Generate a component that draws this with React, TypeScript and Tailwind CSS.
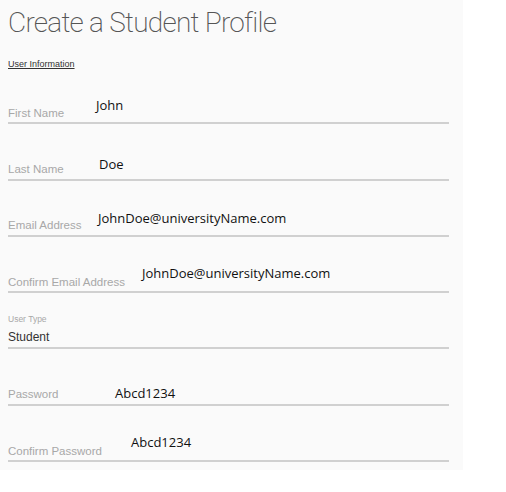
import React from 'react';

interface Field {
  label: string;
  value: string;
  labelBox: string;
  valueShift: string;
}

const fields: Field[] = [
  { label: 'First Name', value: 'John', labelBox: 'w-[88px]', valueShift: 'mb-[7px]' },
  { label: 'Last Name', value: 'Doe', labelBox: 'w-[91px]', valueShift: 'mb-[5px]' },
  { label: 'Email Address', value: 'JohnDoe@universityName.com', labelBox: 'w-[90px]', valueShift: 'mb-[7px]' },
  { label: 'Confirm Email Address', value: 'JohnDoe@universityName.com', labelBox: 'w-[134px]', valueShift: 'mb-[8px]' },
];

const passwordFields: Field[] = [
  { label: 'Password', value: 'Abcd1234', labelBox: 'w-[107px]', valueShift: 'mb-[1px]' },
  { label: 'Confirm Password', value: 'Abcd1234', labelBox: 'w-[123px]', valueShift: 'mb-[8px]' },
];

function TextRow({ field }: { field: Field }) {
  return (
    <div className="flex items-end h-[56.3px] border-b-2 border-[#d0d0d0] pb-[3px]">
      <div className={`${field.labelBox} shrink-0 text-[11.5px] leading-none text-[#a8a8a8] font-['Liberation_Sans',Arial,sans-serif]`}>
        {field.label}
      </div>
      <div className={`${field.valueShift} text-[13px] leading-none text-[#111] font-['Open_Sans',sans-serif]`}>
        {field.value}
      </div>
    </div>
  );
}

export default function App() {
  return (
    <div className="w-[506px] h-[492px] bg-white">
      <div className="w-[463px] h-[470px] bg-[#fafafa] pl-2 pr-[14px]">
        <h1 className="pt-[6px] text-[28px] leading-[34px] font-[200] text-[#555] tracking-[-0.75px] font-['Roboto',sans-serif]">
          Create a Student Profile
        </h1>
        <div className="mt-[20px] text-[9px] leading-none text-[#333] underline font-['Liberation_Sans',Arial,sans-serif]">
          User Information
        </div>

        <div className="-mt-[1px]">
          {fields.map((f) => (
            <TextRow key={f.label} field={f} />
          ))}

          {/* select-style field */}
          <div className="flex flex-col justify-end h-[56.3px] border-b-2 border-[#d0d0d0] pb-[4px] font-['Liberation_Sans',Arial,sans-serif]">
            <div className="text-[8.5px] leading-none text-[#a8a8a8]">User Type</div>
            <div className="mt-[8px] text-[12px] leading-none text-[#333]">Student</div>
          </div>

          {passwordFields.map((f) => (
            <TextRow key={f.label} field={f} />
          ))}
        </div>
      </div>
    </div>
  );
}
